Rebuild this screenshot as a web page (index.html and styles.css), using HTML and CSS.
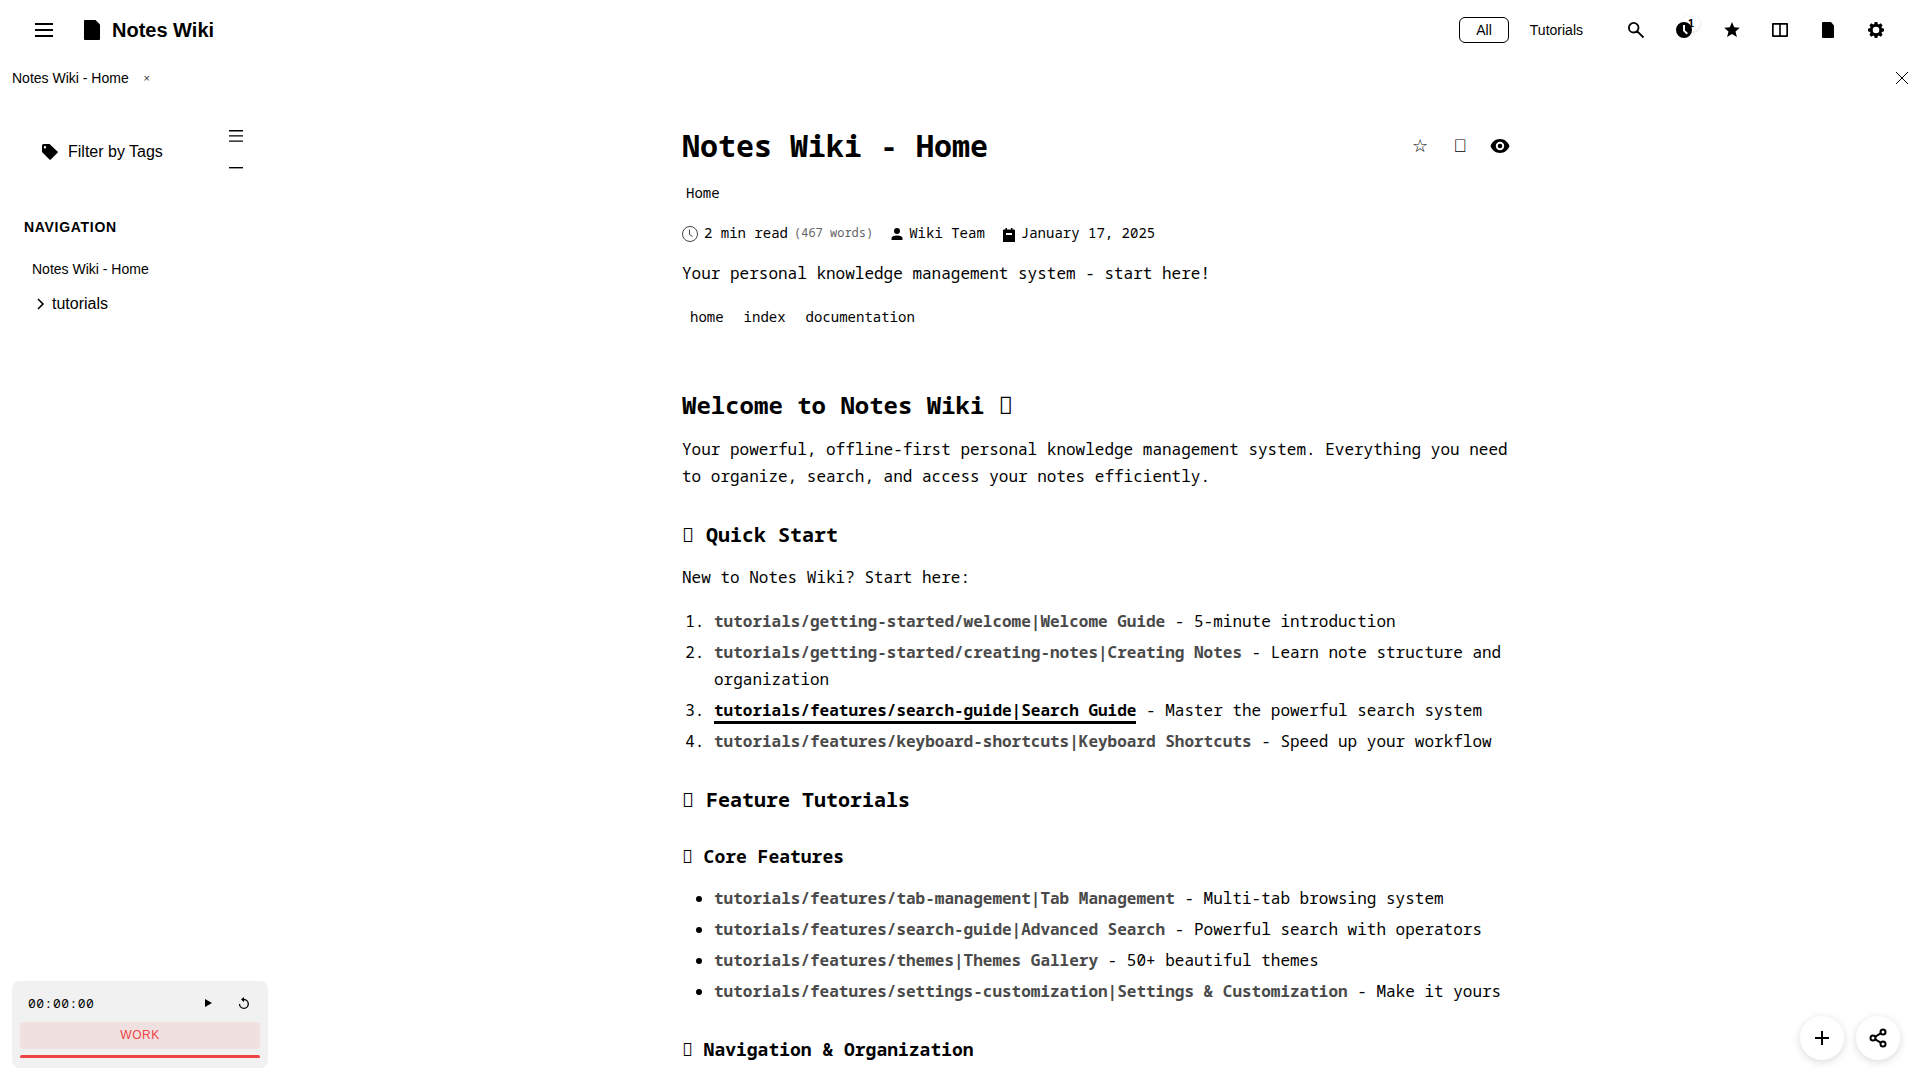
FILE: index.html
```html
<!DOCTYPE html>
<html lang="en">
<head>
<meta charset="utf-8">
<meta name="viewport" content="width=device-width, initial-scale=1">
<title>Notes Wiki - Home</title>
<link rel="stylesheet" href="styles.css">
</head>
<body>
<header class="topbar">
  <button class="icon-btn" aria-label="Toggle sidebar"><svg class="icon-lg" viewBox="0 0 24 24"><path d="M3 5h18v2H3zM3 11h18v2H3zM3 17h18v2H3z"/></svg></button>
  <a class="brand" href="#"><svg class="icon-lg" viewBox="0 0 24 24"><path d="M5 2h10.500l4.500 4.500v14.500a1 1 0 0 1-1 1H5a1 1 0 0 1-1-1V3a1 1 0 0 1 1-1z"/></svg>Notes Wiki</a>
  <nav class="contexts" aria-label="Contexts">
    <button class="context is-active">All</button>
    <button class="context">Tutorials</button>
  </nav>
  <div class="tools">
    <button class="icon-btn" aria-label="Search"><svg class="icon" viewBox="0 0 20 20"><path fill="none" stroke="currentColor" stroke-width="1.800" d="M7.700 2.900a4.800 4.800 0 1 1 0 9.600 4.800 4.800 0 0 1 0-9.600zM11.100 11.100l6.400 6.400"/></svg></button>
    <button class="icon-btn" aria-label="Recent"><svg class="icon" viewBox="0 0 20 20"><path fill-rule="evenodd" d="M10 2a8 8 0 1 1 0 16 8 8 0 0 1 0-16zM9 5v6l3.700 3.400 1.200-1.300L11 10.200V5z"/></svg><span class="badge">1</span></button>
    <button class="icon-btn" aria-label="Favorites"><svg class="icon" viewBox="0 0 20 20"><path d="M10 2l2.200 5.300 5.600.5-4.300 3.700 1.400 5.500L10 14l-4.900 3 1.400-5.500-4.300-3.700 5.600-.5z"/></svg></button>
    <button class="icon-btn" aria-label="Split view"><svg class="icon" viewBox="0 0 20 20"><path fill-rule="evenodd" d="M3 3h14a1 1 0 0 1 1 1v12a1 1 0 0 1-1 1H3a1 1 0 0 1-1-1V4a1 1 0 0 1 1-1zm.700 1.700v10.600h5.500V4.700zm7.100 0v10.600h5.500V4.700z"/></svg></button>
    <button class="icon-btn" aria-label="New note"><svg class="icon" viewBox="0 0 20 20"><path d="M5 2h8l3 3.500V17a1 1 0 0 1-1 1H5a1 1 0 0 1-1-1V3a1 1 0 0 1 1-1z"/></svg></button>
    <button class="icon-btn" aria-label="Settings"><svg class="icon" viewBox="0 0 20 20"><path fill-rule="evenodd" d="M8.700 2h2.600l.5 2 1 .4 1.900-1.100 1.900 1.900-1.100 1.900.4 1 2.100.6v2.600l-2.100.6-.4 1 1.100 1.900-1.900 1.900-1.900-1.100-1 .4-.5 2H8.700l-.5-2-1-.4-1.900 1.100-1.900-1.900 1.100-1.900-.4-1L2 11.300V8.700l2.100-.6.4-1-1.100-1.900 1.900-1.900 1.900 1.100 1-.4zM10 6.700a3.300 3.300 0 1 0 0 6.600 3.300 3.300 0 0 0 0-6.600z"/></svg></button>
  </div>
</header>
<div class="tabbar">
  <a class="tab" href="#">Notes Wiki - Home</a>
  <button class="tab-close" aria-label="Close tab">×</button>
  <button class="close-all" aria-label="Close all tabs"><svg class="icon-sm" viewBox="0 0 12 12"><path fill="none" stroke="currentColor" d="M0 0l12 12M12 0L0 12"/></svg></button>
</div>
<div class="layout">
  <aside class="sidebar">
    <div class="filter-row">
      <button class="filter"><svg class="icon-md" viewBox="0 0 16 16"><path fill-rule="evenodd" d="M1.500 0H7.500l8 7.500a1 1 0 0 1 0 1.300l-6.700 6.700a1 1 0 0 1-1.300 0L0 8V1.500A1.500 1.500 0 0 1 1.500 0zM3 2a1.200 1.200 0 1 0 0 2.400A1.200 1.200 0 0 0 3 2z"/></svg>Filter by Tags</button>
      <div class="filter-tools">
        <button class="mini-btn" aria-label="Expand all"><svg viewBox="0 0 14 12" width="14" height="12"><path d="M0 0h14v1.400H0zM0 5.200h14v1.400H0zM0 10.400h14v1.400H0z"/></svg></button>
        <button class="mini-btn" aria-label="Collapse all"><svg viewBox="0 0 14 12" width="14" height="12"><path d="M0 5h14v1.400H0z"/></svg></button>
      </div>
    </div>
    <h2 class="nav-title">Navigation</h2>
    <nav class="tree">
      <a class="tree-note" href="#">Notes Wiki - Home</a>
      <button class="tree-folder"><svg viewBox="0 0 8 12" width="8" height="12"><path fill="none" stroke="currentColor" stroke-width="1.600" d="M1 1l5 5-5 5"/></svg>tutorials</button>
    </nav>
    <section class="timer" aria-label="Timer">
      <div class="timer-row">
        <span class="timer-time">00:00:00</span>
        <button class="timer-btn" aria-label="Start"><svg viewBox="0 0 12 12" width="12" height="12"><path d="M3 2l7 4-7 4z"/></svg></button>
        <button class="timer-btn" aria-label="Reset"><svg viewBox="0 0 12 12" width="12" height="12"><path fill="none" stroke="currentColor" stroke-width="1.300" d="M1.500 7A4.400 4.400 0 1 0 6 2.500H4"/><path d="M6 0v5L3 2.500z"/></svg></button>
      </div>
      <button class="timer-mode">WORK</button>
      <div class="timer-bar"></div>
    </section>
  </aside>
  <main class="main">
    <article class="note">
      <header class="note-head">
        <h1>Notes Wiki - Home</h1>
        <div class="note-actions">
          <button class="note-btn" aria-label="Favorite">☆</button>
          <button class="note-btn" aria-label="Bookmark">&#xE010;</button>
          <button class="note-btn" aria-label="Reading view"><svg viewBox="0 0 20 14" width="20" height="14"><path fill-rule="evenodd" d="M10 0c4.500 0 8 2.800 9.500 7-1.500 4.200-5 7-9.500 7S2 11.200.5 7C2 2.800 5.500 0 10 0zm0 2.800a4.200 4.200 0 1 0 0 8.400 4.200 4.200 0 0 0 0-8.400z"/><circle cx="10" cy="7" r="2.300"/></svg></button>
        </div>
      </header>
      <nav class="crumbs"><a href="#">Home</a></nav>
      <div class="meta">
        <span class="meta-item"><svg viewBox="0 0 16 16" width="16" height="16"><path fill="none" stroke="#444" d="M8 .5a7.500 7.500 0 1 1 0 15 7.500 7.500 0 0 1 0-15zM7.500 3.500v5l3 2"/></svg>2 min read <small>(467 words)</small></span>
        <span class="meta-item"><svg viewBox="0 0 12 14" width="12" height="14"><path d="M6 1a3 3 0 1 1 0 6 3 3 0 0 1 0-6zM.5 13v-1.500C.5 9.500 2.500 8.500 6 8.500s5.500 1 5.500 3V13z"/></svg>Wiki Team</span>
        <span class="meta-item"><svg viewBox="0 0 12 16" width="12" height="16"><path fill-rule="evenodd" d="M2.500 2h1.500v1.500h4V2h1.500v1.500H11a1 1 0 0 1 1 1V16H0V4.500a1 1 0 0 1 1-1h1.500zM3 7v2h6V7z"/></svg>January 17, 2025</span>
      </div>
      <p class="lead">Your personal knowledge management system - start here!</p>
      <div class="tags"><a href="#">home</a><a href="#">index</a><a href="#">documentation</a></div>
      <h2>Welcome to Notes Wiki &#xE011;</h2>
      <p>Your powerful, offline-first personal knowledge management system. Everything you need to organize, search, and access your notes efficiently.</p>
      <h3>&#xE012; Quick Start</h3>
      <p>New to Notes Wiki? Start here:</p>
      <ol>
        <li><a href="#">tutorials/getting-started/welcome|Welcome Guide</a> - 5-minute introduction</li>
        <li><a href="#">tutorials/getting-started/creating-notes|Creating Notes</a> - Learn note structure and organization</li>
        <li><a class="is-current" href="#">tutorials/features/search-guide|Search Guide</a> - Master the powerful search system</li>
        <li><a href="#">tutorials/features/keyboard-shortcuts|Keyboard Shortcuts</a> - Speed up your workflow</li>
      </ol>
      <h3>&#xE013; Feature Tutorials</h3>
      <h4>&#xE014; Core Features</h4>
      <ul>
        <li><a href="#">tutorials/features/tab-management|Tab Management</a> - Multi-tab browsing system</li>
        <li><a href="#">tutorials/features/search-guide|Advanced Search</a> - Powerful search with operators</li>
        <li><a href="#">tutorials/features/themes|Themes Gallery</a> - 50+ beautiful themes</li>
        <li><a href="#">tutorials/features/settings-customization|Settings &amp; Customization</a> - Make it yours</li>
      </ul>
      <h4>&#xE015; Navigation &amp; Organization</h4>
    </article>
  </main>
</div>
<div class="fabs">
  <button class="fab" aria-label="Create"><svg viewBox="0 0 24 24" width="24" height="24"><path d="M11 5h2v6h6v2h-6v6h-2v-6H5v-2h6z"/></svg></button>
  <button class="fab" aria-label="Share"><svg viewBox="0 0 24 24" width="24" height="24"><g fill="none" stroke="currentColor" stroke-width="2"><circle cx="7" cy="12" r="2.500"/><circle cx="17" cy="6" r="2.500"/><circle cx="17" cy="18" r="2.500"/><path d="M9 10.800l6-3.600M9 13.200l6 3.600"/></g></svg></button>
</div>
</body>
</html>
```
FILE: styles.css
```css
:root {
  --sans: "Liberation Sans", Arial, sans-serif;
  --mono: "Noto Sans Mono", "DejaVu Sans Mono", monospace;
  --accent: #ef4444;
}

* { box-sizing: border-box; }

body {
  margin: 0;
  min-height: 100vh;
  display: flex;
  flex-direction: column;
  background: #fff;
  color: #000;
  font: 16px/24px var(--sans);
}

button {
  border: 0;
  padding: 0;
  background: none;
  color: inherit;
  font: inherit;
  cursor: pointer;
}

a { color: inherit; text-decoration: none; }

svg { display: block; flex: none; fill: currentColor; }

.icon { width: 20px; height: 20px; }
.icon-lg { width: 24px; height: 24px; }
.icon-md { width: 16px; height: 16px; }
.icon-sm { width: 12px; height: 12px; }

/* Top bar */
.topbar {
  display: flex;
  align-items: center;
  height: 60px;
  padding: 0 24px;
}

.icon-btn {
  position: relative;
  display: grid;
  place-items: center;
  width: 40px;
  height: 40px;
}

.brand {
  display: flex;
  align-items: center;
  gap: 8px;
  margin-left: 16px;
  font-size: 20px;
  font-weight: 700;
}

.contexts { display: flex; gap: 4px; margin-left: auto; }

.context {
  padding: 0 16px;
  border: 1px solid transparent;
  border-radius: 6px;
  font-size: 14px;
  line-height: 24px;
}

.context.is-active { border-color: #000; }

.tools { display: flex; gap: 8px; margin-left: 16px; }

.badge {
  position: absolute;
  top: 4px;
  right: 4px;
  width: 18px;
  height: 18px;
  border-radius: 9px;
  box-shadow: 0 1px 3px rgba(0, 0, 0, 0.15);
  font: 700 11px/18px var(--mono);
  text-align: center;
}

/* Open tabs */
.tabbar {
  display: flex;
  align-items: center;
  height: 36px;
  padding: 0 12px;
  font-size: 14px;
}

.tab-close { width: 16px; margin-left: 10px; color: #333; font-size: 11px; }

.close-all { margin-left: auto; }

/* Sidebar */
.layout {
  flex: 1;
  display: grid;
  grid-template-columns: 280px 1fr;
}

.sidebar { display: flex; flex-direction: column; padding: 24px 12px 12px; }

.filter-row {
  display: flex;
  align-items: center;
  justify-content: space-between;
  padding: 0 16px 0 30px;
}

.filter { display: flex; align-items: center; gap: 10px; }

.filter-tools { display: flex; flex-direction: column; }

.mini-btn {
  display: grid;
  place-items: center;
  width: 32px;
  height: 32px;
}

.nav-title {
  margin: 31px 12px 0;
  font-size: 14px;
  letter-spacing: 0.05em;
  text-transform: uppercase;
}

.tree {
  display: flex;
  flex-direction: column;
  align-items: flex-start;
  gap: 11px;
  margin-top: 18px;
  padding: 0 20px;
}

.tree-note { font-size: 14px; }

.tree-folder {
  display: flex;
  align-items: center;
  gap: 7px;
  padding-left: 5px;
}

/* Timer */
.timer {
  margin-top: auto;
  padding: 8px;
  border-radius: 8px;
  background: #f1f1f1;
}

.timer-row { display: flex; align-items: center; height: 28px; padding: 0 4px 0 8px; }

.timer-time { margin-right: auto; font: 13px/20px var(--mono); letter-spacing: 0.5px; }

.timer-btn {
  display: grid;
  place-items: center;
  width: 24px;
  height: 24px;
  margin-left: 12px;
}

.timer-mode {
  display: block;
  width: 100%;
  margin-top: 5px;
  border-radius: 4px;
  background: #f1e0e0;
  color: var(--accent);
  font-size: 12px;
  line-height: 27px;
  letter-spacing: 0.5px;
}

.timer-bar {
  height: 3px;
  margin: 6px 0 2px;
  border-radius: 2px;
  background: var(--accent);
}

/* Note */
.main { padding: 32px 32px 0; font-family: var(--mono); }

.note { max-width: 836px; margin: 0 auto; line-height: 27px; }

.note-head { display: flex; align-items: center; justify-content: space-between; }

h1 { margin: 0; font-size: 30px; line-height: 36px; }

.note-actions { display: flex; gap: 4px; }

.note-btn {
  display: grid;
  place-items: center;
  width: 36px;
  height: 36px;
  font: 18px/24px var(--sans);
}

.crumbs { margin-top: 17px; padding: 0 4px; font-size: 14px; line-height: 24px; }

.meta {
  display: flex;
  gap: 18px;
  margin-top: 16px;
  font-size: 14px;
  line-height: 24px;
}

.meta-item { display: flex; align-items: center; gap: 6px; }

.meta svg { margin-top: 2px; }

.meta small { color: #666; font-size: 12px; }

.note p { margin: 0; }

.note .lead { margin-top: 15px; }

.tags {
  display: flex;
  gap: 4px;
  margin-top: 18px;
  font-size: 14px;
  line-height: 24px;
}

.tags a { padding: 0 8px; }

.note h2 { margin: 60px 0 15px; font-size: 24px; line-height: 32px; }

.note h3 { margin: 31px 0 15px; font-size: 20px; line-height: 28px; }

.note h4 { margin: 32px 0 17px; font-size: 18px; line-height: 24px; }

.note h3 + h4 { margin-top: 30px; }

.note h4:last-child { margin-bottom: 0; }

.note ol,
.note ul { margin: 0; padding-left: 32px; }

.note p + ol { margin-top: 17px; }

.note li + li { margin-top: 4px; }

.note li a { color: #4a4a4a; font-weight: 700; }

.note li .is-current { border-bottom: 3px solid #000; color: #000; }

/* Floating actions */
.fabs {
  position: fixed;
  right: 20px;
  bottom: 20px;
  display: flex;
  gap: 12px;
}

.fab {
  display: grid;
  place-items: center;
  width: 44px;
  height: 44px;
  border-radius: 50%;
  background: #fff;
  box-shadow: 0 2px 8px rgba(0, 0, 0, 0.15);
}
```
